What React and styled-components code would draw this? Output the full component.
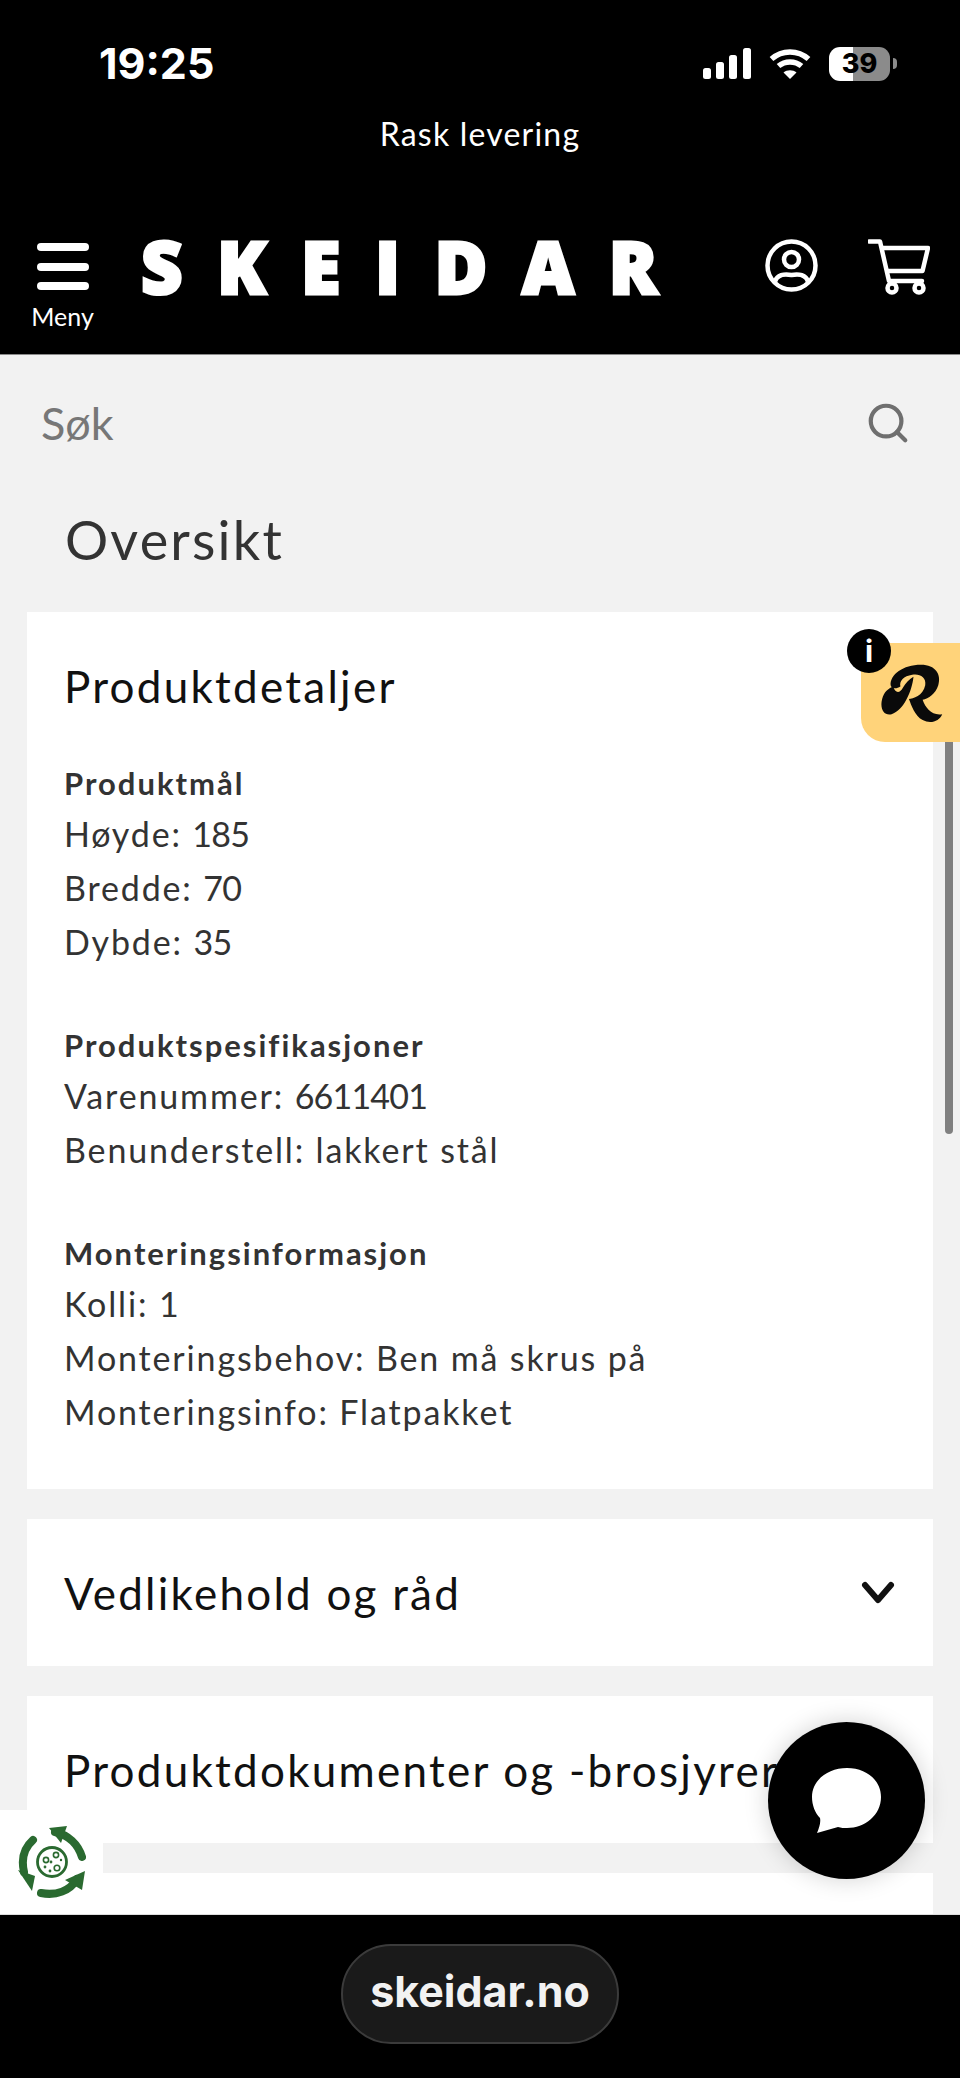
import React from 'react';
import styled, { createGlobalStyle } from 'styled-components';
import { Search } from 'lucide-react';

const GlobalStyle = createGlobalStyle`
  html, body {
    margin: 0;
    padding: 0;
    background: #f2f2f2;
  }
  * {
    box-sizing: border-box;
  }
`;

const Page = styled.div`
  position: relative;
  width: 960px;
  height: 2078px;
  display: flex;
  flex-direction: column;
  overflow: hidden;
  font-family: Lato, sans-serif;
  background: #f2f2f2;
`;

const Header = styled.header`
  flex: none;
  height: 355px;
  background: #000;
  color: #fff;
  border-bottom: 1px solid #8a8a8a;
  display: flex;
  flex-direction: column;
`;

const StatusBar = styled.div`
  height: 112px;
  padding: 15px 70px 0 99px;
  display: flex;
  align-items: center;
  justify-content: space-between;
`;

const Clock = styled.span`
  font-family: Inter, sans-serif;
  font-weight: 700;
  font-size: 43px;
  line-height: 1;
`;

const StatusIcons = styled.div`
  display: flex;
  align-items: center;
  gap: 18px;
`;

const Battery = styled.div`
  position: relative;
  width: 61px;
  height: 34px;
  border-radius: 11px;
  background: linear-gradient(90deg, #fff 0 39%, #8b8b8b 39% 100%);
  color: #000;
  font-family: Inter, sans-serif;
  font-weight: 800;
  font-size: 27px;
  display: flex;
  align-items: center;
  justify-content: center;

  &::after {
    content: '';
    position: absolute;
    right: -7px;
    top: 11px;
    width: 4px;
    height: 11px;
    border-radius: 0 4px 4px 0;
    background: #8b8b8b;
  }
`;

const Promo = styled.div`
  height: 44px;
  margin-bottom: 59px;
  text-align: center;
  font-size: 32px;
  line-height: 44px;
  letter-spacing: 1.2px;
`;

const NavRow = styled.div`
  flex: 1;
  padding: 0 30px 0 31px;
  display: flex;
  align-items: flex-start;
`;

const MenuButton = styled.div`
  width: 63px;
  margin-top: 28px;
  display: flex;
  flex-direction: column;
  align-items: center;
  font-size: 25px;
  line-height: 32px;
`;

const MenuBars = styled.div`
  width: 52px;
  height: 47px;
  margin-bottom: 10px;
  display: flex;
  flex-direction: column;
  justify-content: space-between;
`;

const MenuBar = styled.span`
  height: 8px;
  border-radius: 4px;
  background: #fff;
`;

const Logo = styled.div`
  margin: 6px 0 0 47px;
  width: 534px;
  font-family: 'Open Sans', sans-serif;
  font-weight: 800;
  font-size: 72px;
  line-height: 90px;
  letter-spacing: 34.5px;
  white-space: nowrap;
  -webkit-text-stroke: 3px #fff;
`;

const NavIcons = styled.div`
  margin: 24px 0 0 auto;
  display: flex;
  gap: 50px;
`;

const SearchRow = styled.div`
  height: 136px;
  padding: 0 49px 0 41px;
  display: flex;
  align-items: center;
  justify-content: space-between;
  color: #777;
  font-size: 45px;
`;

const Main = styled.main`
  flex: 1;
  min-height: 0;
  overflow: hidden;
`;

const PageTitle = styled.h1`
  margin: 0;
  height: 121px;
  padding: 0 0 0 65px;
  font-weight: 400;
  font-size: 54px;
  line-height: 98px;
  letter-spacing: 2.2px;
  color: #333;
`;

const Cards = styled.div`
  padding: 0 27px;
  display: flex;
  flex-direction: column;
  gap: 30px;
`;

const Card = styled.section`
  flex: none;
  background: #fff;
  padding: 0 38px 0 37px;
`;

const CardHeader = styled.div`
  height: 147px;
  display: flex;
  align-items: ${(p) => (p.$open ? 'flex-start' : 'center')};
  justify-content: space-between;
  padding-top: ${(p) => (p.$open ? '47px' : '0')};
`;

const CardTitle = styled.h2`
  margin: 0;
  font-weight: 400;
  font-size: 44px;
  line-height: 54px;
  letter-spacing: 2.25px;
  color: #111;
  white-space: nowrap;
`;

const Details = styled.div`
  padding-bottom: 50px;
  display: flex;
  flex-direction: column;
  gap: 52px;
  color: #333;
  font-size: 34px;
  letter-spacing: 1.85px;
`;

const SpecLabel = styled.div`
  font-weight: 700;
  font-size: 31px;
  line-height: 48px;
  letter-spacing: 2px;
`;

const SpecLine = styled.div`
  line-height: 54px;
`;

const Digits = styled.span`
  letter-spacing: -0.8px;
`;

const BottomBar = styled.footer`
  flex: none;
  height: 164px;
  background: #000;
  border-top: 1px solid #ddd;
  display: flex;
  align-items: flex-start;
  justify-content: center;
  padding-top: 29px;
`;

const UrlPill = styled.div`
  width: 278px;
  height: 100px;
  border-radius: 50px;
  background: #1a1a1a;
  border: 2px solid #3b3b3b;
  padding-bottom: 6px;
  color: #f2f2f2;
  font-family: Inter, sans-serif;
  font-weight: 700;
  font-size: 43px;
  display: flex;
  align-items: center;
  justify-content: center;
`;

const ScrollThumb = styled.div`
  position: absolute;
  left: 945px;
  top: 738px;
  width: 8px;
  height: 396px;
  border-radius: 4px;
  background: #808080;
`;

const ReviewBadge = styled.div`
  position: absolute;
  left: 861px;
  top: 643px;
  width: 99px;
  height: 99px;
  padding: 3px 0 0 3px;
  border-radius: 0 0 0 24px;
  background: #ffd37a;
  display: flex;
  align-items: center;
  justify-content: center;
`;

const InfoDot = styled.div`
  position: absolute;
  left: -14px;
  top: -14px;
  width: 44px;
  height: 44px;
  border-radius: 50%;
  background: #000;
  color: #fff;
  font-family: Inter, sans-serif;
  font-weight: 700;
  font-size: 30px;
  display: flex;
  align-items: center;
  justify-content: center;
`;

const ChatButton = styled.div`
  position: absolute;
  left: 768px;
  top: 1722px;
  width: 157px;
  height: 157px;
  border-radius: 50%;
  background: #000;
  box-shadow: 0 0 24px rgba(0, 0, 0, 0.18);
  display: flex;
  align-items: center;
  justify-content: center;
`;

const EcoWidget = styled.div`
  position: absolute;
  left: 0;
  top: 1810px;
  width: 103px;
  height: 104px;
  background: #fff;
  display: flex;
  align-items: center;
  justify-content: center;
`;

const specs = [
  { label: 'Produktmål', lines: ['Høyde: 185', 'Bredde: 70', 'Dybde: 35'] },
  { label: 'Produktspesifikasjoner', lines: ['Varenummer: 6611401', 'Benunderstell: lakkert stål'] },
  { label: 'Monteringsinformasjon', lines: ['Kolli: 1', 'Monteringsbehov: Ben må skrus på', 'Monteringsinfo: Flatpakket'] },
];

// Lato's digits are wider than the ones in the shot, so they get tighter tracking
function withDigits(line) {
  return line.split(/(\d+)/).map((part, i) => (i % 2 ? <Digits key={part}>{part}</Digits> : part));
}

function SignalIcon() {
  return (
    <svg width="48" height="31" viewBox="0 0 48 31" fill="#fff">
      <rect x="0" y="20" width="8" height="11" rx="2.5" />
      <rect x="13" y="14" width="8" height="17" rx="2.5" />
      <rect x="26" y="7" width="8" height="24" rx="2.5" />
      <rect x="40" y="0" width="8" height="31" rx="2.5" />
    </svg>
  );
}

function WifiIcon() {
  return (
    <svg width="42" height="31" viewBox="0 0 42 31" fill="none" stroke="#fff" strokeWidth="5.5">
      <path d="M2.5 11 C13 1.5 29 1.5 39.5 11" />
      <path d="M9.5 18 C16 12.5 26 12.5 32.5 18" />
      <path d="M21 31 L14.5 24.5 C18 21.5 24 21.5 27.5 24.5 Z" fill="#fff" stroke="none" />
    </svg>
  );
}

function UserIcon() {
  return (
    <svg width="53" height="53" viewBox="0 0 53 53" fill="none" stroke="#fff" strokeWidth="4.5">
      <circle cx="26.5" cy="26.5" r="24" />
      <circle cx="26.5" cy="20.5" r="7.5" />
      <path d="M10 42.5 C12 36 19 34.5 26.5 36 C34 34.5 41 36 43 42.5" />
    </svg>
  );
}

function CartIcon() {
  return (
    <svg width="62" height="56" viewBox="0 0 62 56" fill="none" stroke="#fff" strokeWidth="4.5" strokeLinejoin="round">
      <path d="M1 2.5 H12 L21 42 H54" strokeLinecap="round" />
      <path d="M14 9 H60 L54.5 32 H19" />
      <circle cx="24" cy="49" r="4.5" />
      <circle cx="51" cy="49" r="4.5" />
    </svg>
  );
}

function ChevronIcon() {
  return (
    <svg width="34" height="24" viewBox="0 0 34 24" fill="none" stroke="#111" strokeWidth="6" strokeLinecap="round" strokeLinejoin="round">
      <path d="M4 4 L17 19 L30 4" />
    </svg>
  );
}

function ReviewLogo() {
  return (
    <svg width="64" height="62" viewBox="300 190 195 190" fill="#0a0a0a">
      <path d="M332 258 C330 225 370 195 425 195 C470 195 488 225 478 258 C470 285 448 298 430 303 C440 330 458 352 490 347 C482 368 455 378 430 365 C405 350 396 320 388 300 C400 300 432 290 438 258 C442 232 420 222 398 226 C372 230 358 245 362 262 C350 270 336 270 332 258 Z" />
      <path d="M402 232 C398 275 372 335 335 347 C312 353 298 330 306 300 C312 278 325 268 340 262 C345 282 360 285 370 265 C378 250 390 240 402 232 Z" />
    </svg>
  );
}

function ChatBubble() {
  return (
    <svg width="70" height="66" viewBox="0 0 70 66" fill="#fff">
      <path d="M35 0 C54 0 69 12 69 29 C69 47 53 60 35 60 C32 60 29 60 26 59 L5 65 C7 60 9 55 8 50 C3 45 0 37 0 29 C0 12 16 0 35 0 Z" />
    </svg>
  );
}

function EcoIcon() {
  return (
    <svg width="68" height="72" viewBox="0 0 68 72" fill="none" stroke="#2a6a30" strokeLinecap="round">
      <path d="M37 6 C50 9 60 18 64 31" strokeWidth="8" />
      <path d="M31 2 L49 0 L43 17 Z" fill="#2a6a30" stroke="none" />
      <path d="M23 67 C38 70 52 65 59 53" strokeWidth="8" />
      <path d="M67 45 L64 64 L47 54 Z" fill="#2a6a30" stroke="none" />
      <path d="M15 14 C6 22 3 33 6 46" strokeWidth="8" />
      <path d="M0 44 L17 50 L14 65 Z" fill="#2a6a30" stroke="none" />
      <circle cx="34" cy="36" r="14.5" strokeWidth="2.8" />
      <circle cx="28" cy="34" r="2.6" strokeWidth="1.6" />
      <circle cx="38" cy="29" r="2.6" strokeWidth="1.6" />
      <circle cx="39" cy="42" r="2.8" strokeWidth="1.6" />
      <circle cx="33" cy="36" r="0.8" strokeWidth="1.2" />
      <circle cx="27" cy="41" r="0.8" strokeWidth="1.2" />
      <circle cx="32" cy="45" r="0.8" strokeWidth="1.2" />
      <circle cx="43" cy="34" r="0.6" strokeWidth="1.2" />
    </svg>
  );
}

export default function App() {
  return (
    <>
      <GlobalStyle />
      <Page>
        <Header>
          <StatusBar>
            <Clock>19:25</Clock>
            <StatusIcons>
              <SignalIcon />
              <WifiIcon />
              <Battery>39</Battery>
            </StatusIcons>
          </StatusBar>
          <Promo>Rask levering</Promo>
          <NavRow>
            <MenuButton>
              <MenuBars>
                <MenuBar />
                <MenuBar />
                <MenuBar />
              </MenuBars>
              Meny
            </MenuButton>
            <Logo>SKEIDAR</Logo>
            <NavIcons>
              <UserIcon />
              <CartIcon />
            </NavIcons>
          </NavRow>
        </Header>

        <Main>
          <SearchRow>
            Søk
            <Search size={46} color="#6f6f6f" strokeWidth={2.2} />
          </SearchRow>
          <PageTitle>Oversikt</PageTitle>
          <Cards>
            <Card>
              <CardHeader $open>
                <CardTitle>Produktdetaljer</CardTitle>
              </CardHeader>
              <Details>
                {specs.map((spec) => (
                  <div key={spec.label}>
                    <SpecLabel>{spec.label}</SpecLabel>
                    {spec.lines.map((line) => (
                      <SpecLine key={line}>{withDigits(line)}</SpecLine>
                    ))}
                  </div>
                ))}
              </Details>
            </Card>
            <Card>
              <CardHeader>
                <CardTitle>Vedlikehold og råd</CardTitle>
                <ChevronIcon />
              </CardHeader>
            </Card>
            <Card>
              <CardHeader>
                <CardTitle>Produktdokumenter og -brosjyrer</CardTitle>
              </CardHeader>
            </Card>
            <Card>
              <CardHeader />
            </Card>
          </Cards>
        </Main>

        <BottomBar>
          <UrlPill>skeidar.no</UrlPill>
        </BottomBar>

        <ScrollThumb />
        <ReviewBadge>
          <InfoDot>i</InfoDot>
          <ReviewLogo />
        </ReviewBadge>
        <EcoWidget>
          <EcoIcon />
        </EcoWidget>
        <ChatButton>
          <ChatBubble />
        </ChatButton>
      </Page>
    </>
  );
}
